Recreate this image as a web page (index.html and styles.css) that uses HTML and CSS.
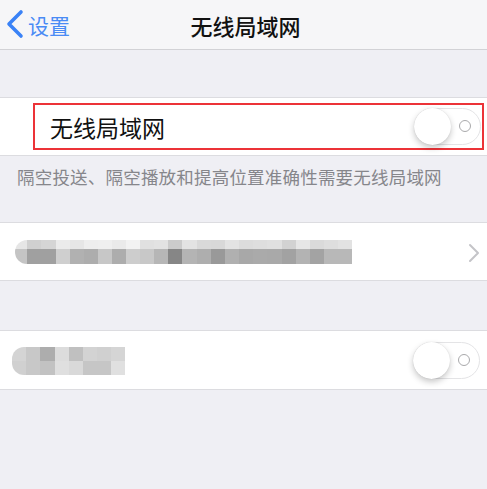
FILE: index.html
```html
<!DOCTYPE html>
<html>
<head>
    <title>无线局域网</title>
    <link rel="stylesheet" href="styles.css">
</head>
<body>

    <div class="navbar">
        <a class="back" href="#">
            <svg class="back-icon" width="18" height="30" viewBox="0 0 18 30">
                <polyline points="15,3 3,15 15,27" fill="none" stroke="#3a82f6" stroke-width="3.6" stroke-linecap="round" stroke-linejoin="round"/>
            </svg>
            <span>设置</span>
        </a>
        <div class="title">无线局域网</div>
        <div></div>
    </div>

    <div class="spacer-top"></div>

    <div class="group">
        <div class="row row-highlight">
            <div class="highlight">
                <span class="label">无线局域网</span>
                <div class="toggle"><div class="knob"></div><div class="ring"></div></div>
            </div>
        </div>
    </div>

    <div class="footer-note">隔空投送、隔空播放和提高位置准确性需要无线局域网</div>

    <div class="group">
        <div class="row">
            <div class="mosaic mosaic-long">
                <div class="strip strip-top"></div>
                <div class="strip strip-bottom"></div>
            </div>
            <svg class="chevron" width="12" height="20" viewBox="0 0 12 20">
                <polyline points="2,2 10,10 2,18" fill="none" stroke="#c4c4c8" stroke-width="2" stroke-linecap="round" stroke-linejoin="round"/>
            </svg>
        </div>
    </div>

    <div class="spacer-mid"></div>

    <div class="group">
        <div class="row row-short">
            <div class="mosaic mosaic-short">
                <div class="strip strip-top"></div>
                <div class="strip strip-bottom"></div>
            </div>
            <div class="toggle"><div class="knob"></div><div class="ring"></div></div>
        </div>
    </div>

</body>
</html>
```

FILE: styles.css
```css
body {
    margin: 0;
    padding: 0;
    background: #efeff4;
    font-family: "Noto Sans CJK SC", "Noto Sans", sans-serif;
    color: #111;
}
.navbar {
    height: 49px;
    display: grid;
    grid-template-columns: 1fr auto 1fr;
    align-items: center;
    background: #f6f6f8;
    border-bottom: 1px solid #d2d2d6;
}
.back {
    display: flex;
    align-items: center;
    gap: 4px;
    padding-left: 6px;
    color: #4a8bf5;
    font-size: 21px;
    text-decoration: none;
}
.back-icon {
    margin-top: -2px;
}
.title {
    font-size: 22px;
    font-weight: 500;
    color: #111;
    padding-left: 4px;
}
.spacer-top {
    height: 47px;
}
.spacer-mid {
    height: 49px;
}
.group {
    background: #fff;
    border-top: 1px solid #dcdce0;
    border-bottom: 1px solid #dcdce0;
}
.row {
    height: 57px;
    display: flex;
    align-items: center;
    justify-content: space-between;
    padding: 0 7px 0 15px;
}
.row-short {
    height: 58px;
    padding-left: 12px;
}
.row-highlight {
    padding: 0 3px 0 33px;
}
.highlight {
    flex: 1;
    height: 43px;
    border: 2px solid #ec3338;
    display: flex;
    align-items: center;
    justify-content: space-between;
    padding: 0 1px 0 15px;
}
.label {
    font-size: 23px;
    color: #111;
}
.toggle {
    position: relative;
    width: 65px;
    height: 35px;
    border: 1.5px solid #e4e4e6;
    border-radius: 19px;
    background: #fff;
}
.knob {
    position: absolute;
    left: -1px;
    top: -1px;
    width: 37px;
    height: 37px;
    border-radius: 50%;
    background: #fff;
    box-shadow: 0 3px 6px rgba(0, 0, 0, 0.22), 0 0 1px rgba(0, 0, 0, 0.15);
}
.ring {
    position: absolute;
    left: 44px;
    top: 11px;
    width: 10px;
    height: 10px;
    border: 1.5px solid #a9a9ab;
    border-radius: 50%;
}
.footer-note {
    height: 66px;
    padding: 8px 0 0 17px;
    box-sizing: border-box;
    font-size: 17.5px;
    letter-spacing: 0.2px;
    color: #86868b;
}
.mosaic {
    border-radius: 12px 0 0 12px;
    overflow: hidden;
}
.mosaic-long {
    width: 337px;
    margin-top: 1px;
}
.mosaic-long .strip-top {
    height: 9px;
    background: linear-gradient(to right,
        #e6e6e6 0 12px, #d0d0d0 12px 26px, #d5d5d5 26px 41px, #ebebeb 41px 55px,
        #e6e6e6 55px 69px, #eeeeee 69px 83px, #efefef 83px 97px, #eaeaea 97px 111px,
        #f2f2f2 111px 125px, #e0e0e0 125px 139px, #e2e2e2 139px 153px, #cbcbcb 153px 167px,
        #e3e3e3 167px 182px, #d9d9d9 182px 196px, #d8d8d8 196px 210px, #e3e3e3 210px 224px,
        #dcdcdc 224px 238px, #dedede 238px 252px, #e0e0e0 252px 267px, #d2d2d2 267px 281px,
        #e6e6e6 281px 295px, #dadada 295px 309px, #dedede 309px 323px, #e2e2e2 323px 337px);
}
.mosaic-long .strip-bottom {
    height: 15px;
    background: linear-gradient(to right,
        #c4c4c4 0 12px, #a0a0a0 12px 26px, #a0a0a0 26px 41px, #cfcfcf 41px 55px,
        #b1b1b1 55px 69px, #adadad 69px 83px, #c7c7c7 83px 97px, #adadad 97px 111px,
        #cdcdcd 111px 125px, #c8c8c8 125px 139px, #b6b6b6 139px 153px, #868686 153px 167px,
        #b4b4b4 167px 182px, #aeaeae 182px 196px, #999999 196px 210px, #b0b0b0 210px 224px,
        #a8a8a8 224px 238px, #aaaaaa 238px 252px, #a9a9a9 252px 267px, #a2a2a2 267px 281px,
        #b3b3b3 281px 295px, #a3a3a3 295px 309px, #b8b8b8 309px 323px, #b8b8b8 323px 337px);
}
.mosaic-short {
    width: 113px;
    margin-top: 2px;
}
.mosaic-short .strip-top {
    height: 14px;
    background: linear-gradient(to right,
        #d4d4d4 0 14px, #c8c8c8 14px 28px, #adadad 28px 43px, #dcdcdc 43px 57px,
        #c0c0c0 57px 71px, #d3d3d3 71px 85px, #d0d0d0 85px 99px, #d5d5d5 99px 113px);
}
.mosaic-short .strip-bottom {
    height: 14px;
    background: linear-gradient(to right,
        #d0d0d0 0 14px, #c8c8c8 14px 28px, #c2c2c2 28px 43px, #dfdfdf 43px 57px,
        #d9d9d9 57px 71px, #c6c6c6 71px 85px, #c6c6c6 85px 99px, #e0e0e0 99px 113px);
}
.chevron {
    margin-top: 3px;
}
```
